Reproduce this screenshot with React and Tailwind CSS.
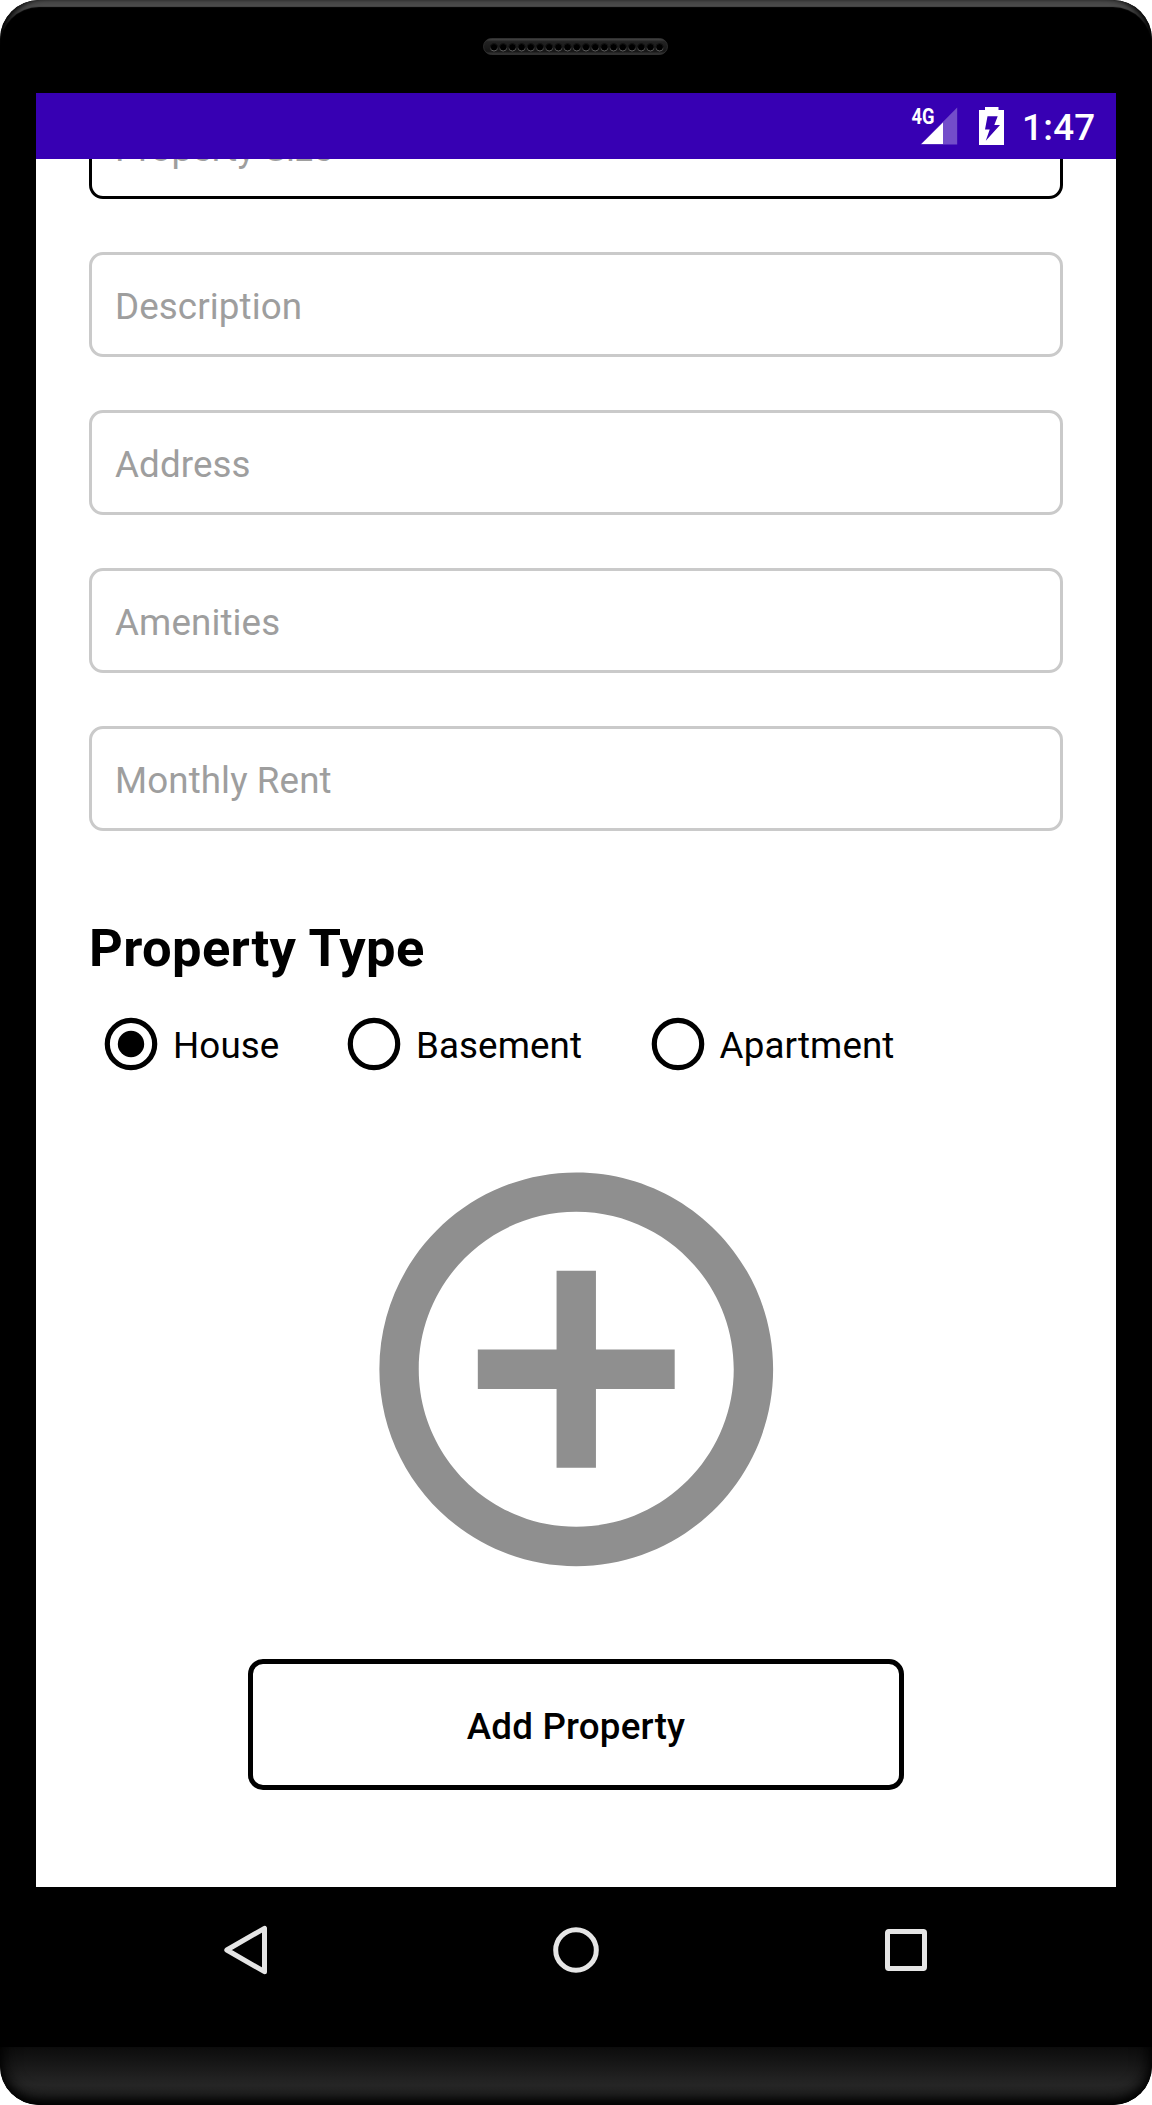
import React from "react";

const holes = Array.from({ length: 19 }, (_, i) => 11 + i * 9.2);
const fields = ["Description", "Address", "Amenities", "Monthly Rent"];

function Speaker() {
  return (
    <svg width="186" height="18" viewBox="0 0 186 18" className="block">
      <defs>
        <linearGradient id="grille" x1="0" y1="0" x2="0" y2="1">
          <stop offset="0" stopColor="#4a4a4a" />
          <stop offset="0.2" stopColor="#222222" />
          <stop offset="0.8" stopColor="#161616" />
          <stop offset="1" stopColor="#3c3c3c" />
        </linearGradient>
        <linearGradient id="hole" x1="0" y1="0" x2="0" y2="1">
          <stop offset="0.4" stopColor="#141414" />
          <stop offset="1" stopColor="#666666" />
        </linearGradient>
      </defs>
      <rect x="0.5" y="0.5" width="184" height="16" rx="8" fill="url(#grille)" stroke="#333333" strokeWidth="0.8" />
      {holes.map((x) => (
        <circle key={x} cx={x} cy="9.3" r="3.7" fill="#000000" stroke="url(#hole)" strokeWidth="1" />
      ))}
    </svg>
  );
}

function StatusBar() {
  return (
    <div className="relative z-10 flex h-[66px] w-full shrink-0 items-start bg-[#3700b3] text-white">
      <svg width="48" height="40" viewBox="0 0 48 40" className="ml-[874px] mt-[13px] block shrink-0 overflow-visible">
        <path d="M47.2 1.6V38.6H10.6Z" fill="#ffffff" fillOpacity="0.3" />
        <path d="M33 16.4V38H11.4Z" fill="#ffffff" />
        <text x="1.5" y="18.3" fontFamily="Roboto, sans-serif" fontWeight="700" fontSize="22" textLength="23" lengthAdjust="spacingAndGlyphs" fill="#ffffff">4G</text>
      </svg>
      <svg width="25" height="38" viewBox="0 0 25 38" className="ml-[21px] mt-[14px] block shrink-0">
        <path fillRule="evenodd" fill="#ffffff" d="M6 0H19.5V3H25V38H0V3H6ZM8.5 9.2L6 22.5H10.7L6.8 33.7L21 18H15.3L18.7 9.2Z" />
      </svg>
      <span className="ml-[18px] mt-[13px] whitespace-nowrap text-[36.75px] font-medium leading-[43px] tracking-[0.3px]">1:47</span>
    </div>
  );
}

function Field({ label, focused }) {
  return (
    <div className={`flex h-[105px] shrink-0 items-center rounded-[14px] border-[3px] pl-[23px] pt-[3px] text-[36.75px] leading-[43px] tracking-[0.1px] text-[#9e9e9e] ${focused ? "border-black" : "border-[#cacaca]"}`}>
      {label}
    </div>
  );
}

function Radio({ label, checked }) {
  return (
    <div className="flex items-center">
      <svg width="54" height="54" viewBox="0 0 54 54" className="block">
        <circle cx="27" cy="27" r="23.7" fill="none" stroke="#000000" strokeWidth="5.2" />
        {checked && <circle cx="27" cy="27" r="13.2" fill="#000000" />}
      </svg>
      <span className="ml-[15px] mt-[2px] whitespace-nowrap text-[36.75px] leading-[43px] tracking-[0.1px]">{label}</span>
    </div>
  );
}

export default function App() {
  return (
    <div className="h-[2105px] w-[1152px] bg-white font-['Roboto',sans-serif]">
      <div className="relative flex h-full w-full flex-col items-center overflow-hidden rounded-[39px] bg-black">
        <div className="pointer-events-none absolute inset-x-0 top-0 h-[60px] rounded-t-[39px] shadow-[inset_8px_0_6px_-3px_#000,inset_-8px_0_6px_-3px_#000,inset_0_7px_1px_#4b4b4b]" />
        <div className="flex h-[93px] w-full shrink-0 justify-center pt-[38px]">
          <Speaker />
        </div>

        <div className="flex h-[1794px] w-[1080px] shrink-0 flex-col bg-white">
          <StatusBar />
          <main className="flex h-[1728px] flex-col overflow-hidden px-[53px]">
            <div className="-mt-[65px] flex flex-col gap-[53px]">
              <Field label="Property Size" focused />
              {fields.map((f) => (
                <Field key={f} label={f} />
              ))}
            </div>
            <h1 className="mt-[86px] whitespace-nowrap text-[52.5px] font-bold leading-[62px] tracking-[0.36px]">Property Type</h1>
            <div className="ml-[15px] mt-[38px] flex">
              <Radio label="House" checked />
              <div className="ml-[67.5px]"><Radio label="Basement" /></div>
              <div className="ml-[68.5px]"><Radio label="Apartment" /></div>
            </div>
            <svg width="472.5" height="472.5" viewBox="0 0 24 24" className="mt-[62px] block shrink-0 self-center" fill="#8f8f8f">
              <path d="M13 7h-2v4H7v2h4v4h2v-4h4v-2h-4V7zm-1-5C6.48 2 2 6.48 2 12s4.48 10 10 10 10-4.48 10-10S17.52 2 12 2zm0 18c-4.41 0-8-3.59-8-8s3.59-8 8-8 8 3.59 8 8-3.59 8-8 8z" />
            </svg>
            <button className="mt-[53px] h-[131px] w-[656px] shrink-0 self-center rounded-[15px] border-[5px] border-black pt-[4px] text-[36.75px] font-medium leading-[43px] tracking-[0.2px]">
              Add Property
            </button>
          </main>
        </div>

        <nav className="flex h-[160px] w-full shrink-0 items-start pt-[38px]">
          <svg width="46" height="50" viewBox="0 0 46 50" className="ml-[223px] block" fill="none" stroke="#e5e5e5" strokeWidth="5" strokeLinejoin="round">
            <path d="M41.5 3.3V46.7L3.8 25Z" />
          </svg>
          <svg width="50" height="50" viewBox="0 0 50 50" className="ml-[282px] block" fill="none" stroke="#e5e5e5" strokeWidth="5">
            <circle cx="25" cy="25" r="20.3" />
          </svg>
          <svg width="42" height="50" viewBox="0 0 42 50" className="ml-[284px] block" fill="none" stroke="#e5e5e5" strokeWidth="5">
            <rect x="2.5" y="6.5" width="37" height="37" rx="1.2" />
          </svg>
        </nav>
        <div className="relative h-[58px] w-full shrink-0 overflow-hidden rounded-b-[39px] bg-linear-to-b from-[#0c0c0c] via-[#262626] via-65% to-[#202020]">
          <div className="absolute inset-x-0 -top-[60px] bottom-0 rounded-b-[39px] shadow-[inset_0_-6px_10px_-2px_#000,inset_0_0_18px_2px_#000]" />
        </div>
      </div>
    </div>
  );
}
